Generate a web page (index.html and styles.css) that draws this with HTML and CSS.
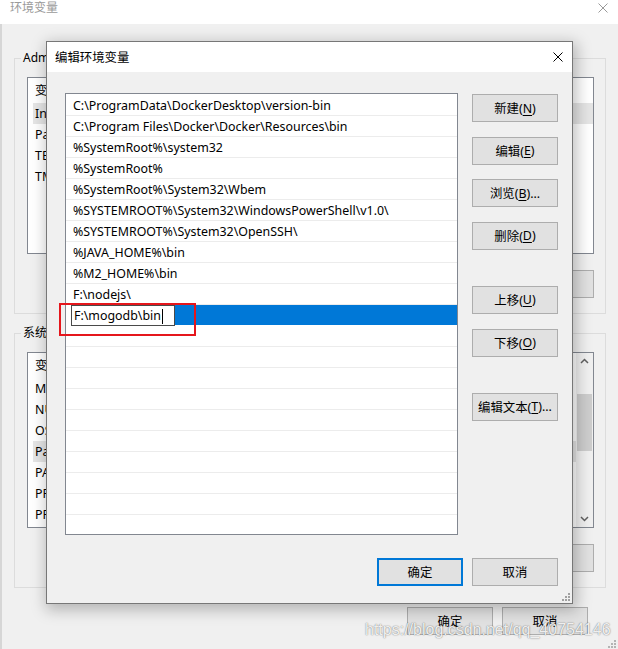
FILE: index.html
```html
<!DOCTYPE html>
<html lang="zh-CN">
<head>
<meta charset="utf-8">
<title>编辑环境变量</title>
<link rel="stylesheet" href="styles.css">
</head>
<body>
<div class="bgwin">
  <div class="bg-title">
    <span class="bg-title-text">环境变量</span>
    <svg class="bg-close" width="10" height="10" viewBox="0 0 10 10"><path d="M0.5 0.5 L9.5 9.5 M9.5 0.5 L0.5 9.5" stroke="#9a9a9a" stroke-width="1" fill="none"/></svg>
  </div>
  <div class="bg-body">
    <fieldset class="group g1">
      <legend>Administrator 的用户变量(U)</legend>
      <div class="vlist v1">
        <div class="vhead"><span class="c1">变量</span></div>
        <div class="vrow sel"><span class="c1">IntelliJ IDEA</span></div>
        <div class="vrow"><span class="c1">Path</span></div>
        <div class="vrow"><span class="c1">TEMP</span></div>
        <div class="vrow"><span class="c1">TMP</span></div>
      </div>
      <div class="gbtns">
        <div class="btn blank"></div>
        <div class="btn blank"></div>
        <div class="btn blank"></div>
      </div>
    </fieldset>
    <fieldset class="group g2">
      <legend>系统变量(S)</legend>
      <div class="vlist v2">
        <div class="vcontent">
          <div class="vhead"><span class="c1">变量</span></div>
          <div class="vrow"><span class="c1">M2_HOME</span></div>
          <div class="vrow"><span class="c1">NUMBER_OF_PROCESSORS</span></div>
          <div class="vrow"><span class="c1">OS</span></div>
          <div class="vrow sel"><span class="c1">Path</span></div>
          <div class="vrow"><span class="c1">PATHEXT</span></div>
          <div class="vrow"><span class="c1">PROCESSOR_ARCHITECTURE</span></div>
          <div class="vrow"><span class="c1">PROCESSOR_IDENTIFIER</span></div>
        </div>
        <div class="scrollbar">
          <svg class="arrow" width="17" height="17" viewBox="0 0 17 17"><path d="M5 10 L8.5 6.5 L12 10" stroke="#606060" stroke-width="1.5" fill="none"/></svg>
          <div class="track"><div class="thumb"></div></div>
          <svg class="arrow" width="17" height="17" viewBox="0 0 17 17"><path d="M5 7 L8.5 10.5 L12 7" stroke="#606060" stroke-width="1.5" fill="none"/></svg>
        </div>
      </div>
      <div class="gbtns">
        <div class="btn blank"></div>
        <div class="btn blank"></div>
        <div class="btn blank"></div>
      </div>
    </fieldset>
    <div class="bg-actions">
      <button class="btn">确定</button>
      <button class="btn">取消</button>
    </div>
  </div>
  <svg class="grip bg-grip" width="8" height="8" viewBox="0 0 8 8"><g fill="#b4b4b4"><rect x="6" y="0" width="2" height="2"/><rect x="3" y="3" width="2" height="2"/><rect x="6" y="3" width="2" height="2"/><rect x="0" y="6" width="2" height="2"/><rect x="3" y="6" width="2" height="2"/><rect x="6" y="6" width="2" height="2"/></g></svg>
</div>

<div class="dlg">
  <div class="dlg-title">
    <span>编辑环境变量</span>
    <svg width="10" height="10" viewBox="0 0 10 10"><path d="M0.5 0.5 L9.5 9.5 M9.5 0.5 L0.5 9.5" stroke="#000" stroke-width="1" fill="none"/></svg>
  </div>
  <div class="dlg-body">
    <div class="dlg-main">
      <div class="plist">
        <div class="prow">C:\ProgramData\DockerDesktop\version-bin</div>
        <div class="prow">C:\Program Files\Docker\Docker\Resources\bin</div>
        <div class="prow">%SystemRoot%\system32</div>
        <div class="prow">%SystemRoot%</div>
        <div class="prow">%SystemRoot%\System32\Wbem</div>
        <div class="prow">%SYSTEMROOT%\System32\WindowsPowerShell\v1.0\</div>
        <div class="prow">%SYSTEMROOT%\System32\OpenSSH\</div>
        <div class="prow">%JAVA_HOME%\bin</div>
        <div class="prow">%M2_HOME%\bin</div>
        <div class="prow">F:\nodejs\</div>
        <div class="prow editing">
          <div class="editbox"><span>F:\mogodb\bin</span><span class="caret"></span></div>
          <div class="hl"></div>
        </div>
        <div class="prow"></div>
        <div class="prow"></div>
        <div class="prow"></div>
        <div class="prow"></div>
        <div class="prow"></div>
        <div class="prow"></div>
        <div class="prow"></div>
        <div class="prow"></div>
        <div class="prow"></div>
        <div class="prow"></div>
      </div>
      <div class="side-btns">
        <button class="btn">新建(<u>N</u>)</button>
        <button class="btn">编辑(<u>E</u>)</button>
        <button class="btn">浏览(<u>B</u>)...</button>
        <button class="btn">删除(<u>D</u>)</button>
        <button class="btn sep">上移(<u>U</u>)</button>
        <button class="btn">下移(<u>O</u>)</button>
        <button class="btn sep">编辑文本(<u>T</u>)...</button>
      </div>
    </div>
    <div class="dlg-actions">
      <button class="btn default">确定</button>
      <button class="btn">取消</button>
    </div>
  </div>
  <svg class="grip dlg-grip" width="8" height="8" viewBox="0 0 8 8"><g fill="#a0a0a0"><rect x="6" y="0" width="2" height="2"/><rect x="3" y="3" width="2" height="2"/><rect x="6" y="3" width="2" height="2"/><rect x="0" y="6" width="2" height="2"/><rect x="3" y="6" width="2" height="2"/><rect x="6" y="6" width="2" height="2"/></g></svg>
</div>

<div class="annot"></div>
<div class="wm">https://blog.csdn.net/qq_40754146</div>
</body>
</html>
```

FILE: styles.css
```css
* { box-sizing: border-box; }
html, body { margin: 0; padding: 0; }
body {
  width: 618px;
  height: 649px;
  overflow: hidden;
  position: relative;
  background: #f0f0f0;
  font-family: "Noto Sans", "Noto Sans CJK SC", sans-serif;
  font-size: 12px;
  color: #000;
}

/* background window */
.bgwin {
  width: 618px;
  height: 649px;
  display: flex;
  flex-direction: column;
  position: relative;
}
.bg-title {
  height: 24px;
  flex: none;
  background: #fff;
  display: flex;
  justify-content: space-between;
  align-items: flex-start;
  padding: 0 10px 0 10px;
}
.bg-title-text { color: #9a9a9a; line-height: 16px; }
.bg-close { margin-top: 3px; }
.bg-body {
  flex: 1;
  border-left: 2px solid #d6d6d6;
  padding: 26px 0 0 12px;
}
.group {
  margin: 0;
  width: 592px;
  border: 1px solid #dcdcdc;
  padding: 11px 11px 15px 12px;
  min-width: 0;
}
.group legend {
  padding: 0 2px;
  margin-left: -6px;
  line-height: 16px;
  font-size: 12px;
}
.g2 { margin-top: 11px; }
.vlist {
  border: 1px solid #828790;
  background: #fff;
  overflow: hidden;
  padding-left: 5px;
  font-size: 12.4px;
}
.v1 { height: 177px; }
.v2 { height: 176px; display: flex; padding-left: 0; }
.vcontent { flex: 1; padding-left: 5px; overflow: hidden; }
.vhead { height: 25px; line-height: 26px; padding-left: 2px; display: flex; white-space: nowrap; }
.vrow { height: 21px; line-height: 22px; padding-left: 2px; display: flex; white-space: nowrap; }
.vrow.sel { background: #e5e5e5; }
.c1 { width: 170px; flex: none; }
.scrollbar {
  width: 17px;
  flex: none;
  background: #f0f0f0;
  display: flex;
  flex-direction: column;
}
.arrow { display: block; flex: none; }
.track { flex: 1; padding: 24px 1px 0 1px; }
.thumb { height: 57px; background: #cdcdcd; }
.gbtns {
  display: flex;
  justify-content: flex-end;
  gap: 9px;
  margin-top: 16px;
}
.bg-actions {
  width: 592px;
  display: flex;
  justify-content: flex-end;
  gap: 9px;
  padding-right: 18px;
  margin-top: 19px;
}
.btn {
  width: 86px;
  height: 28px;
  flex: none;
  margin: 0;
  padding: 0;
  background: #e1e1e1;
  border: 1px solid #adadad;
  font-family: inherit;
  font-size: 12.4px;
  color: #000;
  display: flex;
  align-items: center;
  justify-content: center;
}
.btn u { text-underline-offset: 2px; }
.btn.default { border: 2px solid #0078d7; }
.grip { position: absolute; display: block; }
.bg-grip { right: 2px; bottom: 1px; }

/* edit dialog */
.dlg {
  position: absolute;
  left: 46px;
  top: 41px;
  width: 527px;
  height: 563px;
  border: 1px solid #777;
  background: #f0f0f0;
  box-shadow: 2px 4px 14px 2px rgba(0, 0, 0, 0.25);
  display: flex;
  flex-direction: column;
}
.dlg-title {
  height: 30px;
  flex: none;
  background: #fff;
  display: flex;
  align-items: center;
  justify-content: space-between;
  padding: 0 9px 0 8px;
  font-size: 12.4px;
}
.dlg-body {
  flex: 1;
  padding: 21px 14px 0 18px;
  display: flex;
  flex-direction: column;
}
.dlg-main { display: flex; gap: 14px; }
.plist {
  width: 393px;
  height: 442px;
  flex: none;
  border: 1px solid #828790;
  background: #fff;
  overflow: hidden;
  padding-top: 1px;
  font-size: 12.4px;
}
.prow {
  height: 21px;
  border-bottom: 1px solid #ececec;
  padding: 2px 0 0 7px;
  line-height: 18px;
  white-space: nowrap;
}
.prow.editing {
  padding: 0 0 0 5px;
  display: flex;
  border-bottom-color: #fff;
}
.editbox {
  width: 104px;
  height: 21px;
  flex: none;
  border: 1px solid #4a4a4a;
  background: #fff;
  padding: 1px 0 0 2px;
  display: flex;
  align-items: center;
  line-height: 18px;
}
.caret { width: 1px; height: 15px; background: #000; margin-left: 1px; }
.hl { flex: 1; height: 20px; background: #0078d7; }
.side-btns {
  display: flex;
  flex-direction: column;
  gap: 14.67px;
  padding-top: 1px;
}
.side-btns .sep { margin-top: 21.33px; }
.dlg-actions {
  display: flex;
  justify-content: flex-end;
  gap: 9px;
  margin-top: 23px;
}
.dlg-grip { right: 2px; bottom: 2px; }

/* annotation + watermark overlays */
.annot {
  position: absolute;
  left: 59px;
  top: 303px;
  width: 137px;
  height: 33px;
  border: 2px solid #e5161c;
}
.wm {
  position: absolute;
  left: 365px;
  top: 621px;
  font-family: "Liberation Sans", sans-serif;
  font-size: 16px;
  line-height: 18px;
  color: rgba(255, 255, 255, 0.9);
  text-shadow: 0 0 1px rgba(0, 0, 0, 0.45), 0 0 2px rgba(0, 0, 0, 0.25);
  white-space: nowrap;
}
```
